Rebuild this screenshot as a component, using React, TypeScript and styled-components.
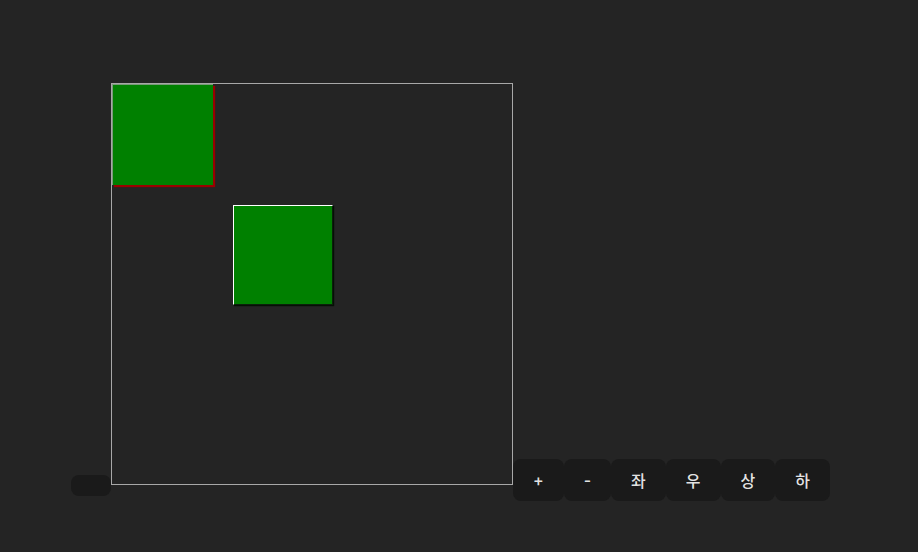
import React, { useState } from "react";
import styled, { createGlobalStyle } from "styled-components";

const GlobalStyle = createGlobalStyle`
  body {
    margin: 0;
    background: #242424;
    color: rgba(255, 255, 255, 0.87);
    font-family: Inter, "Noto Sans CJK KR", sans-serif;
  }
`;

const Page = styled.div`
  display: flex;
  align-items: flex-end;
  padding: 83px 0 0 71px;
`;

const GhostButton = styled.button`
  width: 40px;
  height: 21px;
  margin-bottom: 5px;
  border: none;
  border-radius: 8px;
  background: #1a1a1a;
  padding: 0;
`;

const Board = styled.div`
  position: relative;
  width: 400px;
  height: 400px;
  margin-bottom: 16px;
  border: 1px solid #a8a8a8;
`;

const Square = styled.div<{ $selected?: boolean }>`
  position: absolute;
  width: 101px;
  height: 101px;
  box-sizing: border-box;
  background: #008000;
  ${(p) =>
    p.$selected
      ? `
    box-shadow: 2px 2px 1px #9a0000;
    border-left: 1px solid #7a9a7a;
    border-top: 1px solid #7a9a7a;
  `
      : `
    width: 100px;
    height: 100px;
    border-top: 1px solid #fff;
    border-left: 1px solid #fff;
    border-right: 1px solid #0a200a;
    border-bottom: 1px solid #0a200a;
    box-shadow: 1px 1px 1px #050f05;
  `}
`;

const Controls = styled.div`
  display: flex;
`;

const ControlButton = styled.button`
  display: flex;
  align-items: center;
  justify-content: center;
  height: 42px;
  padding: 0 19px;
  border: 1px solid transparent;
  border-radius: 8px;
  background: #1a1a1a;
  color: rgba(255, 255, 255, 0.9);
  font-family: Inter, "Noto Sans CJK KR", sans-serif;
  font-size: 16px;
  font-weight: 500;
  cursor: pointer;
`;

const labels = ["+", "-", "좌", "우", "상", "하"];

const App = () => {
  const [pos] = useState({ x: 121, y: 121 });

  return (
    <>
      <GlobalStyle />
      <Page>
        <GhostButton />
        <Board>
          <Square $selected style={{ left: 0, top: 0 }} />
          <Square style={{ left: pos.x, top: pos.y }} />
        </Board>
        <Controls>
          {labels.map((l) => (
            <ControlButton key={l}>{l}</ControlButton>
          ))}
        </Controls>
      </Page>
    </>
  );
};

export default App;
